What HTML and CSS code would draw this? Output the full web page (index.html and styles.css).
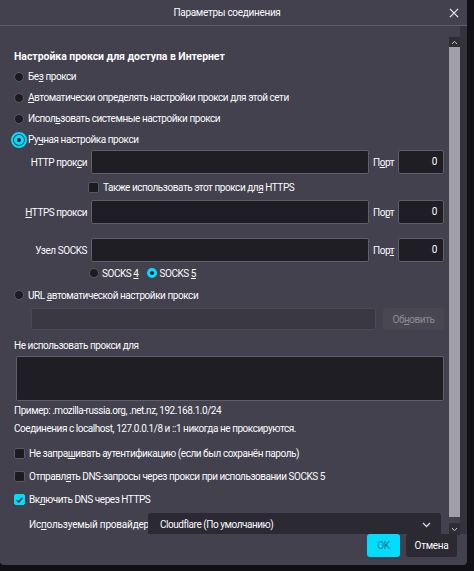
FILE: index.html
```html
<!DOCTYPE html>
<html lang="ru">
<head>
<meta charset="utf-8">
<title>Параметры соединения</title>
<link rel="stylesheet" href="styles.css">
</head>
<body>
<div class="dialog">
  <header class="titlebar">
    <span class="title">Параметры соединения</span>
    <span class="close"><svg width="11" height="11" viewBox="0 0 11 11"><path d="M1 1 L10 10 M10 1 L1 10" stroke="#e8e8ee" stroke-width="1.4" fill="none"/></svg></span>
  </header>
  <div class="main">
    <div class="content">
      <h1 class="heading">Настройка прокси для доступа в Интернет</h1>
      <div class="opt"><span class="radio"></span><span>Бе<u class="ak">з</u> прокси</span></div>
      <div class="opt"><span class="radio"></span><span><u class="ak">А</u>втоматически определять настройки прокси для этой сети</span></div>
      <div class="opt"><span class="radio"></span><span>Испол<u class="ak">ь</u>зовать системные настройки прокси</span></div>
      <div class="opt"><span class="radio checked focused"></span><span>Ру<u class="ak">ч</u>ная настройка прокси</span></div>

      <div class="proxy-row first">
        <span class="plabel">HTTP прок<u class="ak">с</u>и</span>
        <span class="field host"></span>
        <span class="port-label">П<u class="ak">о</u>рт</span>
        <span class="field port">0</span>
      </div>
      <div class="opt sub-check"><span class="check"></span><span>Также использовать этот прокси дл<u class="ak">я</u> HTTPS</span></div>
      <div class="proxy-row">
        <span class="plabel"><u class="ak">H</u>TTPS прокси</span>
        <span class="field host"></span>
        <span class="port-label">По<u class="ak">р</u>т</span>
        <span class="field port">0</span>
      </div>
      <div class="proxy-row socks">
        <span class="plabel">Узел SOCKS</span>
        <span class="field host"></span>
        <span class="port-label">Пор<u class="ak">т</u></span>
        <span class="field port">0</span>
      </div>
      <div class="socks-ver">
        <span class="opt-inline"><span class="radio"></span><span>SOCKS <u class="ak">4</u></span></span>
        <span class="opt-inline"><span class="radio checked"></span><span>SOCKS <u class="ak">5</u></span></span>
      </div>
      <div class="opt url-opt"><span class="radio"></span><span>URL <u class="ak">а</u>втоматической настройки прокси</span></div>
      <div class="url-row">
        <span class="field url"></span>
        <span class="btn-disabled">Об<u class="ak">н</u>овить</span>
      </div>
      <div class="text-line no-proxy">Не использовать прокси для</div>
      <div class="field textarea"></div>
      <div class="text-line hint">Пример: .mozilla-russia.org, .net.nz, 192.168.1.0/24</div>
      <div class="text-line hint">Соединения с localhost, 127.0.0.1/8 и ::1 никогда не проксируются.</div>
      <div class="opt check-row first-check"><span class="check"></span><span>Не запра<u class="ak">ш</u>ивать аутентификацию (если был сохранён пароль)</span></div>
      <div class="opt check-row"><span class="check"></span><span>Отправл<u class="ak">я</u>ть DNS-запросы через прокси при использовании SOCKS 5</span></div>
      <div class="opt check-row"><span class="check checked"><svg width="10" height="10" viewBox="0 0 10 10"><path d="M2 5.2 L4.1 7.3 L8.2 2.6" stroke="#1c1b22" stroke-width="1.6" fill="none"/></svg></span><span>Вк<u class="ak">л</u>ючить DNS через HTTPS</span></div>
      <div class="provider-row">
        <span class="provider-label">Ис<u class="ak">п</u>ользуемый провайдер</span>
        <span class="select"><span>Cloudflare (По умолчанию)</span><svg width="9" height="6" viewBox="0 0 9 6"><path d="M1 1 L4.5 4.5 L8 1" stroke="#d8d8de" stroke-width="1.3" fill="none"/></svg></span>
      </div>
    </div>
    <div class="scrollbar">
      <span class="sb-btn up"><svg width="7" height="5" viewBox="0 0 7 5"><path d="M1 4 L3.5 1.3 L6 4" stroke="#c8c8cf" stroke-width="1" fill="none"/></svg></span>
      <span class="sb-thumb"></span>
      <span class="sb-btn down"><svg width="7" height="5" viewBox="0 0 7 5"><path d="M1 1 L3.5 3.7 L6 1" stroke="#c8c8cf" stroke-width="1" fill="none"/></svg></span>
    </div>
    <div class="edge"></div>
  </div>
  <footer class="footer">
    <button class="btn primary">OK</button>
    <button class="btn">Отмена</button>
  </footer>
</div>
</body>
</html>
```
FILE: styles.css
```css
* { box-sizing: border-box; }
html, body { margin: 0; padding: 0; }
body {
  background: #111014;
  width: 474px;
  height: 571px;
  overflow: hidden;
  font-family: Roboto, "Noto Sans", sans-serif;
  font-size: 10px;
  letter-spacing: -0.45px;
  color: #fbfbfe;
}
.ak { text-decoration: underline; text-underline-offset: 1px; }

.dialog {
  width: 467px;
  height: 565px;
  background: #42414d;
  border-radius: 0 0 4px 4px;
  display: flex;
  flex-direction: column;
}
.titlebar {
  height: 26px;
  flex: none;
  border-bottom: 1px solid #5d5c67;
  display: flex;
  align-items: center;
  justify-content: center;
  position: relative;
}
.title { font-size: 10px; letter-spacing: -0.3px; padding-right: 13px; }
.close {
  position: absolute;
  right: 8px;
  top: 8px;
  width: 10px;
  height: 10px;
  display: flex;
}
.close svg { width: 10px; height: 10px; }
.main {
  height: 508px;
  flex: none;
  display: flex;
}
.content {
  width: 449px;
  flex: none;
  overflow: hidden;
  padding: 23px 0 0 14px;
}
.heading {
  margin: 0;
  font-size: 10.5px;
  letter-spacing: -0.05px;
  font-weight: bold;
  height: 17px;
  line-height: 16px;
  white-space: nowrap;
}
.opt {
  display: flex;
  align-items: center;
  height: 21px;
  white-space: nowrap;
}
.opt .radio, .opt .check { margin-right: 4px; }
.radio {
  width: 10px;
  height: 10px;
  border-radius: 50%;
  background: #1c1b22;
  border: 1px solid #5a5963;
  flex: none;
  display: inline-block;
}
.radio.checked {
  border: 3px solid #00ddff;
  background: #1c1b22;
}
.radio.focused {
  outline: 2px solid #00ddff;
  outline-offset: 1px;
}
.check {
  width: 11px;
  height: 11px;
  border-radius: 2px;
  background: #1c1b22;
  border: 1px solid #5a5963;
  flex: none;
  display: inline-flex;
  align-items: center;
  justify-content: center;
}
.check.checked { background: #00ddff; border-color: #00ddff; }

.proxy-row {
  display: flex;
  align-items: center;
  height: 24px;
}
.proxy-row.socks { margin-top: 14px; }
.plabel {
  width: 74px;
  text-align: right;
  padding-right: 1px;
  margin-right: 3px;
  white-space: nowrap;
}
.field {
  background: #1f1e25;
  border: 1px solid #5f5e69;
  border-radius: 2px;
  display: block;
}
.field.host { width: 278px; height: 24px; }
.port-label {
  width: 29px;
  text-align: center;
}
.field.port {
  width: 46px;
  height: 24px;
  text-align: right;
  padding-right: 6px;
  line-height: 22px;
}
.sub-check { height: 26px; padding-left: 74px; }

.socks-ver {
  height: 22px;
  display: flex;
  align-items: center;
  padding-left: 75px;
  gap: 8px;
}
.opt-inline { display: inline-flex; align-items: center; gap: 3px; }
.url-opt { height: 22px; }
.url-row {
  display: flex;
  margin-top: 2px;
  padding-left: 17px;
}
.field.url {
  width: 345px;
  height: 22px;
  background: #3a3943;
  border-color: #4b4a54;
}
.btn-disabled {
  margin-left: 7px;
  width: 61px;
  height: 22px;
  background: #494852;
  color: #8c8b95;
  border-radius: 3px;
  display: flex;
  align-items: center;
  justify-content: center;
}
.text-line { height: 16px; line-height: 16px; white-space: nowrap; }
.no-proxy { margin-top: 8px; }
.field.textarea {
  width: 428px;
  height: 45px;
  margin: 2px 0 0 2px;
}
.hint { margin-top: 2px; }
.check-row { height: 23px; }
.first-check { margin-top: 5px; }
.provider-row {
  display: flex;
  align-items: center;
  margin-top: 2px;
  padding-left: 15px;
  height: 23px;
}
.provider-label { width: 119px; white-space: nowrap; letter-spacing: -0.2px; }
.select {
  width: 293px;
  height: 23px;
  background: #2b2a33;
  border-radius: 3px;
  display: flex;
  align-items: center;
  justify-content: space-between;
  padding: 0 10px 0 12px;
}

.scrollbar {
  width: 11px;
  flex: none;
  display: flex;
  flex-direction: column;
  padding-top: 11px;
}
.sb-btn {
  height: 10px;
  background: #2e2d35;
  display: flex;
  align-items: center;
  justify-content: center;
  flex: none;
}
.sb-btn.down { height: 12px; margin-top: 6px; }
.sb-thumb {
  height: 470px;
  background: #a1a0a9;
  flex: none;
}
.edge {
  width: 7px;
  flex: none;
  background: #34333b;
}

.footer {
  flex: 1;
  display: flex;
  justify-content: flex-end;
  align-items: flex-start;
  gap: 6px;
  padding-right: 10px;
}
.btn {
  font-family: inherit;
  font-size: 10px;
  letter-spacing: -0.3px;
  height: 23px;
  border: none;
  border-radius: 3px;
  background: #2b2a33;
  color: #fbfbfe;
  padding: 0;
  width: 51px;
}
.btn.primary {
  width: 33px;
  background: #00ddff;
  color: #1f7585;
}
```
